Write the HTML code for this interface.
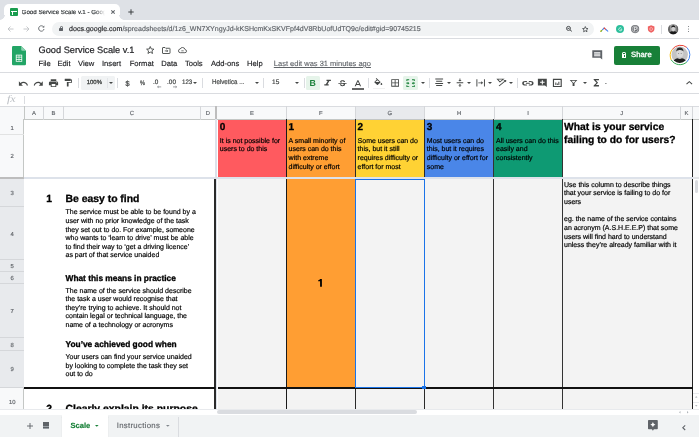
<!DOCTYPE html>
<html><head><meta charset="utf-8">
<style>
*{box-sizing:border-box;margin:0;padding:0}
html,body{width:699px;height:437px;overflow:hidden;background:#fff;font-family:"Liberation Sans",sans-serif;position:relative;text-rendering:geometricPrecision}
.a{position:absolute}
.t{position:absolute;white-space:nowrap;line-height:1}
svg{position:absolute;overflow:visible}
#root{position:absolute;left:0;top:0;width:699px;height:437px;will-change:transform}
.k{-webkit-text-stroke:0.18px #000}
.kb{-webkit-text-stroke:0.3px #000}
</style></head><body><div id="root">

<!-- ===== Chrome tab strip ===== -->
<div class="a" style="left:0;top:0;width:699px;height:20px;background:#dee1e6"></div>
<div class="a" style="left:4px;top:4px;width:116px;height:17px;background:#fff;border-radius:5px 5px 0 0"></div>
<div class="a" style="left:0px;top:15px;width:5px;height:5px;background:radial-gradient(circle at 0 0,#dee1e6 4.5px,#fff 5px)"></div>
<div class="a" style="left:119px;top:15px;width:5px;height:5px;background:radial-gradient(circle at 100% 0,#dee1e6 4.5px,#fff 5px)"></div>
<!-- favicon -->
<div class="a" style="left:9.7px;top:8px;width:8.1px;height:8px;background:#1a9d4f;border-radius:1px"></div>
<div class="a" style="left:10.6px;top:11px;width:6.3px;height:0.8px;background:#fff"></div>
<div class="a" style="left:12.2px;top:11px;width:0.8px;height:4.2px;background:#fff"></div>
<div class="t" style="-webkit-text-stroke:0.2px #3c4043;left:21.6px;top:10.00px;font-size:6.2px;color:#3c4043;width:84px;overflow:hidden">Good Service Scale v.1 - Google Sheets</div>
<div class="a" style="left:95px;top:6px;width:11px;height:12px;background:linear-gradient(90deg,rgba(255,255,255,0),#fff 90%)"></div>
<svg style="left:110.8px;top:10.3px" width="4" height="4" viewBox="0 0 4 4"><path d="M0.3 0.3L3.7 3.7M3.7 0.3L0.3 3.7" stroke="#5f6368" stroke-width="1.05"/></svg>
<svg style="left:128px;top:9px" width="6" height="6" viewBox="0 0 6 6"><path d="M3 0.3V5.7M0.3 3H5.7" stroke="#3c4043" stroke-width="1"/></svg>

<!-- ===== Address row ===== -->
<div class="a" style="left:0;top:37.5px;width:699px;height:0.6px;background:#dadce0"></div>
<svg style="left:7px;top:25.5px" width="7" height="6" viewBox="0 0 7 6"><path d="M6.5 3H1M3.5 0.5L1 3L3.5 5.5" stroke="#c0c2c5" stroke-width="0.9" fill="none"/></svg>
<svg style="left:22.7px;top:25.5px" width="7" height="6" viewBox="0 0 7 6"><path d="M0.5 3H6M3.5 0.5L6 3L3.5 5.5" stroke="#c0c2c5" stroke-width="0.9" fill="none"/></svg>
<svg style="left:37.8px;top:25.3px" width="7" height="7" viewBox="0 0 7 7"><path d="M5.6 2A2.7 2.7 0 1 0 6 4" stroke="#5f6368" stroke-width="0.9" fill="none"/><path d="M6.3 0.6V2.6H4.3Z" fill="#5f6368"/></svg>
<div class="a" style="left:52.2px;top:22.1px;width:541.6px;height:13.6px;background:#f1f3f4;border-radius:7px"></div>
<div class="a" style="left:59.3px;top:27.7px;width:4px;height:3.4px;background:#5f6368;border-radius:0.4px"></div>
<div class="a" style="left:60px;top:25.6px;width:2.6px;height:3.2px;border:0.8px solid #5f6368;border-radius:1.3px 1.3px 0 0"></div>
<div class="t" style="-webkit-text-stroke:0.15px #202124;left:69.1px;top:25.90px;font-size:7.05px;color:#202124">docs.google.com<span style="color:#5f6368;-webkit-text-stroke:0.15px #5f6368">/spreadsheets/d/1z6_WN7XYngyJd-kKSHcmKxSKVFpf4dV8RbUofUdTQ9c/edit#gid=90745215</span></div>
<svg style="left:566px;top:26.3px" width="6.6" height="5.6" viewBox="0 0 6.6 5.6"><circle cx="2.5" cy="2.4" r="2" stroke="#3c4043" stroke-width="0.9" fill="none"/><path d="M4 3.9L5.9 5.4M1.5 2.4H3.5" stroke="#3c4043" stroke-width="0.9"/></svg>
<svg style="left:581.5px;top:26px" width="6.6" height="6" viewBox="0 0 24 22"><path d="M12 2l2.9 6.9 7.1.6-5.4 4.7 1.6 7-6.2-3.7-6.2 3.7 1.6-7L2 9.5l7.1-.6z" stroke="#3c4043" stroke-width="2.8" fill="none" stroke-linejoin="round"/></svg>
<svg style="left:600.2px;top:26.5px" width="8.4" height="5" viewBox="0 0 8.4 5"><path d="M0.6 4.3L2.6 2.6" stroke="#fbbc04" stroke-width="1.1" stroke-linecap="round"/><path d="M2.6 2.6L4.2 1" stroke="#4285f4" stroke-width="1.1" stroke-linecap="round"/><path d="M4.2 1L6 2.6" stroke="#ea4335" stroke-width="1.1" stroke-linecap="round"/><path d="M6 2.6L7.8 4.2" stroke="#4285f4" stroke-width="1.1" stroke-linecap="round"/><circle cx="1.3" cy="4" r="0.7" fill="#34a853"/></svg>
<div class="a" style="left:615.8px;top:25.2px;width:8.2px;height:8.2px;border-radius:50%;background:#2dbf9c"></div>
<svg style="left:617.6px;top:27px" width="4.6" height="4.6" viewBox="0 0 10 10"><path d="M7.8 3A3.4 3.4 0 1 0 8.4 5.6H5.4" stroke="#fff" stroke-width="1.4" fill="none"/></svg>
<svg style="left:631.4px;top:25.1px" width="8.2" height="8.2" viewBox="0 0 8.2 8.2"><circle cx="4.1" cy="4.1" r="4.1" fill="#6f7276"/><circle cx="4.1" cy="4.1" r="3" fill="none" stroke="#c9cacc" stroke-width="0.7"/><path d="M3.3 6.2V2.3H4.6Q5.8 2.3 5.8 3.4Q5.8 4.5 4.6 4.5H3.3" stroke="#fff" stroke-width="0.8" fill="none"/></svg>
<svg style="left:647px;top:25.4px" width="8.3" height="8" viewBox="0 0 8 9"><path d="M4 0.3L7.7 1.6V4.5Q7.7 7.3 4 8.7Q0.3 7.3 0.3 4.5V1.6Z" fill="#ef6262"/><circle cx="4" cy="4.5" r="1.6" fill="none" stroke="#fff" stroke-width="0.7" opacity="0.7"/></svg>
<div class="a" style="left:661.2px;top:25px;width:0.6px;height:8.5px;background:#dadce0"></div>
<svg style="left:667.5px;top:24.2px" width="10.4" height="10.4" viewBox="0 0 21.4 21.4"><defs><clipPath id="av2"><circle cx="10.7" cy="10.7" r="10.7"/></clipPath></defs><g clip-path="url(#av2)"><rect width="21.4" height="21.4" fill="#9a9a9a"/><ellipse cx="10.9" cy="10" rx="4" ry="5" fill="#d0d0d0"/><path d="M6.5 8Q6.6 3 10.8 2.8Q15.2 3 15.3 8Q14 5.8 10.8 6Q7.8 5.9 6.5 8Z" fill="#222"/><path d="M1 22Q2.5 15.5 8.2 15Q10.8 16.6 13.4 15Q19 15.5 20.4 22Z" fill="#1a1a1a"/><path d="M0 0H4V21.4H0ZM17.4 0H21.4V21.4H17.4Z" fill="#444" opacity="0.6"/></g></svg>
<div class="a" style="left:687.8px;top:26px;width:1.2px;height:1.2px;border-radius:50%;background:#5f6368;box-shadow:0 2.5px 0 #5f6368,0 5px 0 #5f6368"></div>

<!-- ===== Docs header ===== -->
<svg style="left:12.2px;top:45.8px" width="14" height="19.2" viewBox="0 0 14 19.2"><path d="M0 1.2Q0 0 1.2 0H9.2L14 4.8V18Q14 19.2 12.8 19.2H1.2Q0 19.2 0 18Z" fill="#23a566"/><path d="M9.2 0V3.6Q9.2 4.8 10.4 4.8H14Z" fill="#8ed1b1"/><path d="M3.8 8.7H10.2V15.7H3.8Z" fill="#fff"/><path d="M4.6 9.5H6.7V10.8H4.6ZM7.3 9.5H9.4V10.8H7.3ZM4.6 11.6H6.7V12.9H4.6ZM7.3 11.6H9.4V12.9H7.3ZM4.6 13.7H6.7V14.9H4.6ZM7.3 13.7H9.4V14.9H7.3Z" fill="#23a566"/></svg>
<div class="t" style="-webkit-text-stroke:0.2px #202124;left:38.5px;top:45.6px;font-size:9.25px;color:#202124">Good Service Scale v.1</div>
<svg style="left:145.8px;top:46px" width="8.5" height="8" viewBox="0 0 24 23"><path d="M12 1.5l3 7 7.5.6-5.7 4.9 1.8 7.4L12 17.5l-6.6 3.9 1.8-7.4L1.5 9.1 9 8.5z" stroke="#444746" stroke-width="2.6" fill="none" stroke-linejoin="round"/></svg>
<svg style="left:161.8px;top:46.5px" width="8.5" height="7" viewBox="0 0 17 14"><path d="M1 2Q1 1 2 1H6L7.5 2.5H15Q16 2.5 16 3.5V12Q16 13 15 13H2Q1 13 1 12Z" stroke="#444746" stroke-width="1.8" fill="none"/><path d="M5.5 7.8H11.5M9.3 5.6L11.5 7.8L9.3 10" stroke="#444746" stroke-width="1.6" fill="none"/></svg>
<svg style="left:178px;top:47px" width="9" height="6.2" viewBox="0 0 19 13"><path d="M5 12H14.5Q18 12 18 8.8Q18 5.8 15 5.5Q14 1 9.5 1Q6 1 4.6 4.2Q1 4.6 1 8.2Q1 12 5 12Z" stroke="#444746" stroke-width="1.8" fill="none"/><path d="M7 8H12" stroke="#444746" stroke-width="1.5" fill="none"/></svg>

<div class="t" style="-webkit-text-stroke:0.15px #202124;top:59.9px;font-size:7.6px;color:#202124;left:38.5px">File</div>
<div class="t" style="-webkit-text-stroke:0.15px #202124;top:59.9px;font-size:7.6px;color:#202124;left:57.5px">Edit</div>
<div class="t" style="-webkit-text-stroke:0.15px #202124;top:59.9px;font-size:7.6px;color:#202124;left:78px">View</div>
<div class="t" style="-webkit-text-stroke:0.15px #202124;top:59.9px;font-size:7.6px;color:#202124;left:102px">Insert</div>
<div class="t" style="-webkit-text-stroke:0.15px #202124;top:59.9px;font-size:7.6px;color:#202124;left:129.7px">Format</div>
<div class="t" style="-webkit-text-stroke:0.15px #202124;top:59.9px;font-size:7.6px;color:#202124;left:161.3px">Data</div>
<div class="t" style="-webkit-text-stroke:0.15px #202124;top:59.9px;font-size:7.6px;color:#202124;left:184.9px">Tools</div>
<div class="t" style="-webkit-text-stroke:0.15px #202124;top:59.9px;font-size:7.6px;color:#202124;left:210.9px">Add-ons</div>
<div class="t" style="-webkit-text-stroke:0.15px #202124;top:59.9px;font-size:7.6px;color:#202124;left:247px">Help</div>
<div class="t" style="top:59.9px;-webkit-text-stroke:0.12px #5f6368;font-size:7.5px;color:#5f6368;left:273.8px;text-decoration:underline">Last edit was 31 minutes ago</div>

<svg style="left:591.9px;top:49.9px" width="10.5" height="10" viewBox="0 0 10.5 10"><path d="M0.3 0.2H10.2V9.6L8.1 7.8H0.3Z" fill="#5f6368"/><path d="M2.1 2.2H8.3V3.2H2.1ZM2.1 5.2H8.3V6.2H2.1Z" fill="#fff"/><path d="M2.1 3.2H8.3V5.2H2.1Z" fill="#c9cbcd"/></svg>
<div class="a" style="left:613.8px;top:45.8px;width:46.2px;height:18.9px;background:#188038;border-radius:2px"></div>
<div class="a" style="left:621.6px;top:54.3px;width:4.8px;height:3.4px;background:#fff;border-radius:0.5px"></div><div class="a" style="left:623.6px;top:55.4px;width:0.8px;height:1.2px;background:#188038"></div>
<div class="a" style="left:622.4px;top:52px;width:3.2px;height:3.4px;border:0.8px solid #fff;border-bottom:none;border-radius:1.6px 1.6px 0 0"></div>
<div class="t" style="-webkit-text-stroke:0.3px #fff;left:631px;top:51.4px;font-size:7.7px;letter-spacing:0.05px;color:#fff">Share</div>
<svg style="left:668.8px;top:44.4px" width="21.4" height="21.4" viewBox="0 0 21.4 21.4"><defs><clipPath id="av"><circle cx="10.7" cy="10.7" r="8.2"/></clipPath></defs><g fill="none" stroke-width="1"><path d="M3.2 5.5A10.2 10.2 0 0 1 17.9 3.5" stroke="#ea4335"/><path d="M17.9 3.5A10.2 10.2 0 0 1 17.9 17.9" stroke="#4285f4"/><path d="M17.9 17.9A10.2 10.2 0 0 1 2.2 15.8" stroke="#34a853"/><path d="M2.2 15.8A10.2 10.2 0 0 1 3.2 5.5" stroke="#fbbc04"/></g><g clip-path="url(#av)"><rect width="21.4" height="21.4" fill="#c4c4c4"/><ellipse cx="10.9" cy="9.2" rx="3.4" ry="4.2" fill="#d9d9d9"/><path d="M7.2 7.5Q7.4 3.6 10.8 3.4Q14.4 3.5 14.5 7.5Q13.6 5.8 10.8 6Q8.2 5.9 7.2 7.5Z" fill="#2b2b2b"/><path d="M3 21Q4 14.8 8.6 14.2Q10.8 15.8 13 14.2Q17.6 14.8 18.6 21Z" fill="#1f1f1f"/><ellipse cx="9.6" cy="9.6" rx="0.6" ry="0.4" fill="#555"/><ellipse cx="12.2" cy="9.6" rx="0.6" ry="0.4" fill="#555"/></g></svg>

<div class="a" style="left:0;top:72px;width:699px;height:0.7px;background:#dadce0"></div>

<!-- ===== Toolbar ===== -->
<!-- separators -->
<div class="a" style="left:77.8px;top:78px;width:0.6px;height:10.2px;background:#dadce0"></div>
<div class="a" style="left:117.4px;top:78px;width:0.6px;height:10.2px;background:#dadce0"></div>
<div class="a" style="left:202.2px;top:78px;width:0.6px;height:10.2px;background:#dadce0"></div>
<div class="a" style="left:263.3px;top:78px;width:0.6px;height:10.2px;background:#dadce0"></div>
<div class="a" style="left:303.5px;top:78px;width:0.6px;height:10.2px;background:#dadce0"></div>
<div class="a" style="left:368.3px;top:78px;width:0.6px;height:10.2px;background:#dadce0"></div>
<div class="a" style="left:429.3px;top:78px;width:0.6px;height:10.2px;background:#dadce0"></div>
<div class="a" style="left:517.1px;top:78px;width:0.6px;height:10.2px;background:#dadce0"></div>
<!-- zoom box -->
<div class="a" style="left:81.2px;top:76.3px;width:33.4px;height:13.3px;background:#f1f3f4;border-radius:1.5px"></div>
<div class="a" style="left:107.3px;top:78px;width:0.6px;height:10px;background:#e3e5e8"></div>
<div class="t" style="-webkit-text-stroke:0.3px #444746;left:86.7px;top:80.40px;font-size:6px;color:#444746">100%</div>
<!-- text buttons -->
<div class="t" style="-webkit-text-stroke:0.25px #444746;left:125.5px;top:80.00px;font-size:7.4px;color:#444746">$</div>
<div class="t" style="-webkit-text-stroke:0.25px #444746;left:140px;top:80.60px;font-size:6.6px;color:#444746;transform:scaleX(0.85);transform-origin:0 0">%</div>
<div class="t" style="-webkit-text-stroke:0.2px #444746;left:152.9px;top:80.40px;font-size:6.4px;color:#444746">.0</div>
<svg style="left:157px;top:85.9px" width="4.2" height="1.8" viewBox="0 0 4.2 1.8"><path d="M4.2 0.9H0.8M1.6 0.1L0.5 0.9L1.6 1.7" stroke="#5f6368" stroke-width="0.6" fill="none"/></svg>
<div class="t" style="-webkit-text-stroke:0.2px #444746;left:167.1px;top:80.40px;font-size:6.4px;color:#444746">.00</div>
<svg style="left:172.6px;top:85.9px" width="4.2" height="1.8" viewBox="0 0 4.2 1.8"><path d="M0 0.9H3.4M2.6 0.1L3.7 0.9L2.6 1.7" stroke="#5f6368" stroke-width="0.6" fill="none"/></svg>
<div class="t" style="-webkit-text-stroke:0.2px #444746;left:181.8px;top:80.40px;font-size:6.5px;color:#444746;transform:scaleX(0.95);transform-origin:0 0">123</div>
<div class="t" style="-webkit-text-stroke:0.2px #444746;left:212.4px;top:80.40px;font-size:6.8px;color:#444746;transform:scaleX(0.91);transform-origin:0 0">Helvetica ...</div>
<div class="t" style="-webkit-text-stroke:0.2px #444746;left:272.1px;top:80.30px;font-size:6.5px;color:#444746">15</div>
<!-- arrows -->
<svg style="left:109.2px;top:82.4px" width="4" height="2" viewBox="0 0 4 2"><path d="M0 0H4L2 2Z" fill="#444746"/></svg>
<svg style="left:193.2px;top:82.4px" width="4" height="2" viewBox="0 0 4 2"><path d="M0 0H4L2 2Z" fill="#444746"/></svg>
<svg style="left:254.8px;top:82.4px" width="4" height="2" viewBox="0 0 4 2"><path d="M0 0H4L2 2Z" fill="#444746"/></svg>
<svg style="left:294.5px;top:82.4px" width="4" height="2" viewBox="0 0 4 2"><path d="M0 0H4L2 2Z" fill="#444746"/></svg>
<svg style="left:420.8px;top:82.4px" width="4" height="2" viewBox="0 0 4 2"><path d="M0 0H4L2 2Z" fill="#444746"/></svg>
<svg style="left:446.5px;top:82.4px" width="4" height="2" viewBox="0 0 4 2"><path d="M0 0H4L2 2Z" fill="#444746"/></svg>
<svg style="left:467.1px;top:82.4px" width="4" height="2" viewBox="0 0 4 2"><path d="M0 0H4L2 2Z" fill="#444746"/></svg>
<svg style="left:488.2px;top:82.4px" width="4" height="2" viewBox="0 0 4 2"><path d="M0 0H4L2 2Z" fill="#444746"/></svg>
<svg style="left:508.8px;top:82.4px" width="4" height="2" viewBox="0 0 4 2"><path d="M0 0H4L2 2Z" fill="#444746"/></svg>
<svg style="left:583px;top:82.4px" width="4" height="2" viewBox="0 0 4 2"><path d="M0 0H4L2 2Z" fill="#444746"/></svg>
<svg style="left:605px;top:83.2px" width="1.8" height="0.9" viewBox="0 0 4 2"><path d="M0 0H4L2 2Z" fill="#444746"/></svg>
<!-- Bold btn -->
<div class="a" style="left:306px;top:76.1px;width:14.2px;height:13.6px;background:#e6f4ea;border-radius:1.5px"></div>
<div class="t" style="left:309.6px;top:79px;font-size:8.8px;font-weight:700;color:#188038">B</div>
<!-- text color underbar -->
<div class="a" style="left:352px;top:87.7px;width:11.8px;height:2px;background:#666"></div>
<div class="a" style="left:373px;top:88px;width:12px;height:1.2px;background:#f1f1f1"></div>
<!-- merge bg -->
<div class="a" style="left:403.4px;top:76px;width:14.7px;height:13.8px;background:#e6f4ea;border-radius:1.5px"></div>
<svg style="left:17.71px;top:77.56px" width="10.67" height="11.47" viewBox="0 0 24 24" preserveAspectRatio="none" fill="#444746"><path d='M12.5 8c-2.65 0-5.05.99-6.9 2.6L2 7v9h9l-3.62-3.62c1.39-1.16 3.16-1.88 5.12-1.88 3.54 0 6.55 2.31 7.6 5.5l2.37-.78C21.08 11.03 17.15 8 12.5 8z'/></svg><!-- undo -->
<svg style="left:33.32px;top:77.56px" width="10.67" height="11.47" viewBox="0 0 24 24" preserveAspectRatio="none" fill="#444746"><path d='M18.4 10.6C16.55 8.99 14.15 8 11.5 8c-4.65 0-8.58 3.03-9.96 7.22L3.9 16c1.050-3.19 4.05-5.5 7.6-5.5 1.95 0 3.73.72 5.12 1.88L13 16h9V7l-3.6 3.6z'/></svg><!-- redo -->
<svg style="left:47.88px;top:77.70px" width="11.04" height="10.40" viewBox="0 0 24 24" preserveAspectRatio="none" fill="#444746"><path d='M19 8H5c-1.66 0-3 1.34-3 3v6h4v4h12v-4h4v-6c0-1.66-1.34-3-3-3zm-3 11H8v-5h8v5zm3-7c-.55 0-1-.45-1-1s.45-1 1-1 1 .45 1 1-.45 1-1 1zm-1-9H6v4h12V3z'/></svg><!-- print -->
<svg style="left:63.08px;top:78.22px" width="10.31" height="9.36" viewBox="0 0 24 24" preserveAspectRatio="none" fill="#444746"><path d='M18 4V3c0-.55-.45-1-1-1H5c-.55 0-1 .45-1 1v4c0 .55.45 1 1 1h12c.55 0 1-.45 1-1V6h1v4H9v11c0 .55.45 1 1 1h2c.55 0 1-.45 1-1v-9h8V4h-3z'/></svg><!-- paint -->
<svg style="left:321.10px;top:78.31px" width="13.20" height="10.11" viewBox="0 0 24 24" preserveAspectRatio="none" fill="#444746"><path d='M10 4v3h2.21l-3.42 8H6v3h8v-3h-2.21l3.42-8H18V4z'/></svg><!-- italic -->
<svg style="left:337.43px;top:78.80px" width="10.93" height="9.59" viewBox="0 0 24 24" preserveAspectRatio="none" fill="#444746"><path d='M7.24 8.75c-.26-.48-.39-1.03-.39-1.67 0-.61.13-1.16.4-1.67.26-.5.63-.93 1.11-1.29.48-.35 1.05-.63 1.7-.83.66-.19 1.39-.29 2.18-.29.81 0 1.54.11 2.210.34.66.22 1.23.54 1.69.94.47.4.83.88 1.08 1.43.25.55.38 1.15.38 1.81h-3.01c0-.31-.05-.59-.15-.85-.09-.27-.24-.49-.44-.68-.2-.19-.45-.33-.75-.44-.3-.1-.66-.16-1.06-.16-.39 0-.74.04-1.03.13-.29.09-.53.21-.72.36-.19.16-.34.34-.44.55-.1.21-.15.43-.15.66 0 .48.25.88.74 1.21.38.25.77.48 1.41.7H7.39c-.05-.08-.11-.17-.15-.25zM21 12v-2H3v2h9.62c.18.07.4.14.55.2.37.17.66.34.87.51.21.17.35.36.43.57.07.2.11.43.11.69 0 .23-.05.45-.14.66-.09.2-.23.38-.42.53-.19.15-.42.26-.71.35-.29.08-.63.13-1.01.13-.43 0-.83-.04-1.18-.13s-.66-.23-.91-.42c-.25-.19-.45-.44-.59-.75-.14-.31-.25-.76-.25-1.21H6.4c0 .55.08 1.13.24 1.58.16.45.37.85.65 1.21.28.35.6.66.98.92.37.26.78.48 1.22.65.44.17.9.3 1.38.39.48.08.96.13 1.44.13.8 0 1.530-.09 2.18-.28s1.21-.45 1.67-.79c.46-.34.82-.77 1.070-1.27s.38-1.07.38-1.71c0-.6-.1-1.14-.31-1.61-.05-.11-.11-.23-.17-.33H21z'/></svg><!-- strike -->
<svg style="left:352.09px;top:78.74px" width="11.82" height="10.11" viewBox="0 0 24 24" preserveAspectRatio="none" fill="#444746"><path d='M11 3L5.5 17h2.25l1.12-3h6.25l1.12 3h2.25L13 3h-2zm-1.38 9L12 5.67 14.38 12H9.62z'/></svg><!-- textA -->
<svg style="left:373.27px;top:77.80px" width="10.67" height="9.88" viewBox="0 0 24 24" preserveAspectRatio="none" fill="#444746"><path d='M16.56 8.94L7.62 0 6.21 1.41l2.38 2.38-5.15 5.15c-.59.59-.59 1.54 0 2.12l5.5 5.5c.29.29.68.44 1.06.44s.77-.15 1.06-.44l5.5-5.5c.59-.58.59-1.53 0-2.120zM5.21 10L10 5.21 14.79 10H5.21zM19 11.5s-2 2.17-2 3.5c0 1.1.9 2 2 2s2-.9 2-2c0-1.33-2-3.5-2-3.5z'/></svg><!-- fill -->
<svg style="left:389.62px;top:77.77px" width="10.27" height="9.87" viewBox="0 0 24 24" preserveAspectRatio="none" fill="#444746"><path d='M3 3v18h18V3H3zm8 16H5v-6h6v6zm0-8H5V5h6v6zm8 8h-6v-6h6v6zm0-8h-6V5h6v6z'/></svg><!-- borders -->
<svg style="left:405.40px;top:77.72px" width="11.20" height="10.27" viewBox="0 0 24 24" preserveAspectRatio="none" fill="#188038"><path d='M3 3h6v2H5v2H3zM15 3h6v4h-2V5h-4zM3 17h2v2h4v2H3zM19 17h2v4h-6v-2h4zM3 10.5h3V8.5l3.5 3.5-3.5 3.5v-2H3zM21 10.5h-3V8.5l-3.5 3.5 3.5 3.5v-2h3z'/></svg><!-- merge -->
<svg style="left:433.70px;top:77.47px" width="10.40" height="12.24" viewBox="0 0 24 24" preserveAspectRatio="none" fill="#444746"><path d='M3 3h18v2H3zM5 7.3h14v2H5zM3 11.6h18v2H3zM5 15.9h14v2H5z'/></svg><!-- align -->
<svg style="left:454.95px;top:77.70px" width="9.90" height="9.49" viewBox="0 0 24 24" preserveAspectRatio="none" fill="#444746"><path d='M8 19h3v4h2v-4h3l-4-4-4 4zm8-14h-3V1h-2v4H8l4 4 4-4zM4 11v2h16v-2H4z'/></svg><!-- valign -->
<svg style="left:475.48px;top:78.08px" width="11.33" height="9.73" viewBox="0 0 24 24" preserveAspectRatio="none" fill="#444746"><path d='M3 3h2v18H3zM19 3h2v18h-2zM7 11h6.2V8l4 4-4 4v-3H7z'/></svg><!-- wrap -->
<svg style="left:496.03px;top:78.12px" width="11.73" height="9.47" viewBox="0 0 24 24" preserveAspectRatio="none" fill="#444746"><path d='M3 3h12l-7 7z' fill='none' stroke='#444746' stroke-width='2.2'/><path d='M19.5 8.5L7 21l-1.6-1.6 12.5-12.5z'/><path d='M21 5l-.5 6-5.5-5.5z'/></svg><!-- rotate -->
<svg style="left:521.82px;top:78.85px" width="11.76" height="8.40" viewBox="0 0 24 24" preserveAspectRatio="none" fill="#444746"><path d='M10 7H7a5 5 0 0 0 0 10h3M14 7h3a5 5 0 0 1 0 10h-3M8 12h8' fill='none' stroke='#444746' stroke-width='3.2'/></svg><!-- link -->
<svg style="left:537.21px;top:78.17px" width="10.68" height="9.96" viewBox="0 0 24 24" preserveAspectRatio="none" fill="#444746"><path fill-rule='evenodd' d='M2 2h20v20l-4-4H2zM10.8 5.2v3.9H6.9v2.6h3.9v3.9h2.4v-3.9h3.9V9.1h-3.9V5.2z'/></svg><!-- comment -->
<svg style="left:552.11px;top:78.17px" width="10.68" height="9.96" viewBox="0 0 24 24" preserveAspectRatio="none" fill="#444746"><path fill-rule='evenodd' d='M2 2h20v20H2zM4.6 4.6v14.8h14.8V4.6z'/><path d='M7.5 11h2.2v6H7.5zM10.9 13h2.2v4h-2.2zM14.3 9h2.2v8h-2.2z'/></svg><!-- chart -->
<svg style="left:568.74px;top:79.02px" width="9.12" height="7.87" viewBox="0 0 24 24" preserveAspectRatio="none" fill="#444746"><path fill-rule='evenodd' d='M2 3h20l-7.5 9.5V21h-5v-8.5zM6.5 5.3h11L12 12.2z'/></svg><!-- filter -->
<svg style="left:591.15px;top:77.42px" width="10.60" height="11.25" viewBox="0 0 24 24" preserveAspectRatio="none" fill="#444746"><path d='M18 4H6v2l6.5 6L6 18v2h12v-3h-7l5-5-5-5h7z'/></svg><!-- sigma -->
<svg style="left:683.15px;top:77.31px" width="12.60" height="11.66" viewBox="0 0 24 24" preserveAspectRatio="none" fill="#444746"><path d='M12 8l-6 6 1.41 1.41L12 10.83l4.59 4.58L18 14z'/></svg><!-- expand -->


<div class="a" style="left:0;top:93px;width:699px;height:0.7px;background:#dadce0"></div>

<!-- ===== Formula bar ===== -->
<div class="t" style="left:7.1px;top:94.6px;font-family:'Liberation Serif',serif;font-style:italic;font-size:10px;color:#b8bcc1;transform:scaleX(1.2);transform-origin:0 0">fx</div>
<div class="a" style="left:24px;top:95.8px;width:0.7px;height:8.6px;background:#dadce0"></div>

<!-- ===== Grid ===== -->
<!-- column header row -->
<div class="a" style="left:0;top:106.3px;width:699px;height:13.7px;background:#f8f9fa;border-top:0.6px solid #dadce0;border-bottom:0.7px solid #c4c7c5"></div>
<div class="a" style="left:355.3px;top:106.6px;width:69.2px;height:12.2px;background:#e8eaed"></div>
<!-- row header column -->
<div class="a" style="left:0;top:119.4px;width:24.4px;height:290px;background:#f8f9fa;border-right:0.7px solid #c4c7c5"></div>
<div class="a" style="left:0;top:178.8px;width:24px;height:208.5px;background:#e8eaed"></div>
<!-- header col lines -->
<div class="a" style="left:24.1px;top:106.3px;width:0.7px;height:13.7px;background:#c4c7c5"></div>
<div class="a" style="left:43.4px;top:106.3px;width:0.6px;height:13.7px;background:#d5d7da"></div>
<div class="a" style="left:63.1px;top:106.3px;width:0.6px;height:13.7px;background:#d5d7da"></div>
<div class="a" style="left:200.3px;top:106.3px;width:0.6px;height:13.7px;background:#d5d7da"></div>
<div class="a" style="left:286.1px;top:106.3px;width:0.6px;height:13.7px;background:#d5d7da"></div>
<div class="a" style="left:355.1px;top:106.3px;width:0.6px;height:13.7px;background:#d5d7da"></div>
<div class="a" style="left:424.3px;top:106.3px;width:0.6px;height:13.7px;background:#d5d7da"></div>
<div class="a" style="left:493.5px;top:106.3px;width:0.6px;height:13.7px;background:#d5d7da"></div>
<div class="a" style="left:562.1px;top:106.3px;width:0.6px;height:13.7px;background:#d5d7da"></div>
<div class="a" style="left:680.3px;top:106.3px;width:0.6px;height:13.7px;background:#d5d7da"></div>
<div class="a" style="left:692.1px;top:106.3px;width:0.6px;height:13.7px;background:#d5d7da"></div>
<!-- header letters -->
<div class="t" style="left:24.4px;width:19.2px;text-align:center;top:111.7px;font-size:5.9px;color:#5f6368;-webkit-text-stroke:0.15px #5f6368">A</div>
<div class="t" style="left:43.6px;width:19.7px;text-align:center;top:111.7px;font-size:5.9px;color:#5f6368;-webkit-text-stroke:0.15px #5f6368">B</div>
<div class="t" style="left:63.3px;width:137.2px;text-align:center;top:111.7px;font-size:5.9px;color:#5f6368;-webkit-text-stroke:0.15px #5f6368">C</div>
<div class="t" style="left:200.5px;width:14.7px;text-align:center;top:111.7px;font-size:5.9px;color:#5f6368;-webkit-text-stroke:0.15px #5f6368">D</div>
<div class="t" style="left:217.5px;width:68.8px;text-align:center;top:111.7px;font-size:5.9px;color:#5f6368;-webkit-text-stroke:0.15px #5f6368">E</div>
<div class="t" style="left:286.3px;width:69px;text-align:center;top:111.7px;font-size:5.9px;color:#5f6368;-webkit-text-stroke:0.15px #5f6368">F</div>
<div class="t" style="left:355.3px;width:69.2px;text-align:center;top:111.7px;font-size:5.9px;color:#5f6368;-webkit-text-stroke:0.15px #5f6368">G</div>
<div class="t" style="left:424.5px;width:69.2px;text-align:center;top:111.7px;font-size:5.9px;color:#5f6368;-webkit-text-stroke:0.15px #5f6368">H</div>
<div class="t" style="left:493.7px;width:68.6px;text-align:center;top:111.7px;font-size:5.9px;color:#5f6368;-webkit-text-stroke:0.15px #5f6368">I</div>
<div class="t" style="left:562.3px;width:118.7px;text-align:center;top:111.7px;font-size:5.9px;color:#5f6368;-webkit-text-stroke:0.15px #5f6368">J</div>
<div class="t" style="left:680.6px;width:11.7px;text-align:center;top:111.7px;font-size:5.9px;color:#5f6368;-webkit-text-stroke:0.15px #5f6368">K</div>
<!-- row header lines and numbers -->
<div class="a" style="left:0;top:134.2px;width:24.4px;height:0.6px;background:#e2e3e3"></div>
<div class="a" style="left:0;top:206px;width:24.4px;height:0.6px;background:#d5d7da"></div>
<div class="a" style="left:0;top:259.3px;width:24.4px;height:0.6px;background:#d5d7da"></div>
<div class="a" style="left:0;top:271.2px;width:24.4px;height:0.6px;background:#d5d7da"></div>
<div class="a" style="left:0;top:283.2px;width:24.4px;height:0.6px;background:#d5d7da"></div>
<div class="a" style="left:0;top:337px;width:24.4px;height:0.6px;background:#d5d7da"></div>
<div class="a" style="left:0;top:350.3px;width:24.4px;height:0.6px;background:#d5d7da"></div>
<div class="a" style="left:0;top:387.1px;width:24.4px;height:0.6px;background:#d5d7da"></div>
<div class="t" style="left:0;width:24.4px;text-align:center;top:126.5px;font-size:5.9px;color:#5f6368;-webkit-text-stroke:0.15px #5f6368">1</div>
<div class="t" style="left:0;width:24.4px;text-align:center;top:155.2px;font-size:5.9px;color:#5f6368;-webkit-text-stroke:0.15px #5f6368">2</div>
<div class="t" style="left:0;width:24.4px;text-align:center;top:192.2px;font-size:5.9px;color:#5f6368;-webkit-text-stroke:0.15px #5f6368">3</div>
<div class="t" style="left:0;width:24.4px;text-align:center;top:232.5px;font-size:5.9px;color:#5f6368;-webkit-text-stroke:0.15px #5f6368">4</div>
<div class="t" style="left:0;width:24.4px;text-align:center;top:265.0px;font-size:5.9px;color:#5f6368;-webkit-text-stroke:0.15px #5f6368">5</div>
<div class="t" style="left:0;width:24.4px;text-align:center;top:277.0px;font-size:5.9px;color:#5f6368;-webkit-text-stroke:0.15px #5f6368">6</div>
<div class="t" style="left:0;width:24.4px;text-align:center;top:310.0px;font-size:5.9px;color:#5f6368;-webkit-text-stroke:0.15px #5f6368">7</div>
<div class="t" style="left:0;width:24.4px;text-align:center;top:343.7px;font-size:5.9px;color:#5f6368;-webkit-text-stroke:0.15px #5f6368">8</div>
<div class="t" style="left:0;width:24.4px;text-align:center;top:368.3px;font-size:5.9px;color:#5f6368;-webkit-text-stroke:0.15px #5f6368">9</div>
<div class="t" style="left:0;width:24.4px;text-align:center;top:401.0px;font-size:5.9px;color:#5f6368;-webkit-text-stroke:0.15px #5f6368">10</div>

<!-- frozen column line (header) -->
<div class="a" style="left:215.2px;top:106.3px;width:2.3px;height:13.7px;background:#bdbdbd"></div>

<!-- row 1-2 colored cells -->
<div class="a" style="left:217.5px;top:120px;width:68.8px;height:56.7px;background:#ff5a5f"></div>
<div class="a" style="left:286.3px;top:120px;width:69px;height:56.7px;background:#ff9e33"></div>
<div class="a" style="left:355.3px;top:120px;width:69.2px;height:56.7px;background:#ffd234"></div>
<div class="a" style="left:424.5px;top:120px;width:69.2px;height:56.7px;background:#4a86e8"></div>
<div class="a" style="left:493.7px;top:120px;width:68.6px;height:56.7px;background:#0e9a73"></div>
<!-- rows 3-10 cell fills -->
<div class="a" style="left:217.5px;top:178.8px;width:475.5px;height:230.2px;background:#f3f3f3"></div>
<div class="a" style="left:286.3px;top:178.8px;width:69px;height:208.5px;background:#ff9e33"></div>
<!-- frozen col line (grid) -->
<div class="a" style="left:215.2px;top:119.4px;width:2.3px;height:290px;background:#dde2ea"></div>
<!-- black borders -->
<div class="a" style="left:214.4px;top:178.8px;width:1.3px;height:230.2px;background:#2a2a2a"></div>
<div class="a" style="left:285.9px;top:119.4px;width:1px;height:290px;background:#1a1a1a"></div>
<div class="a" style="left:354.9px;top:119.4px;width:1.1px;height:290px;background:#2a2a2a"></div>
<div class="a" style="left:423.8px;top:119.4px;width:1.1px;height:290px;background:#2a2a2a"></div>
<div class="a" style="left:492.6px;top:119.4px;width:1.2px;height:290px;background:#333"></div>
<div class="a" style="left:561.6px;top:119.4px;width:1.2px;height:290px;background:#333"></div>
<div class="a" style="left:691.8px;top:119.4px;width:1.3px;height:290px;background:#222"></div>
<div class="a" style="left:24.4px;top:387.2px;width:191.1px;height:1.9px;background:#111"></div>
<div class="a" style="left:217.5px;top:387.2px;width:475.5px;height:1.9px;background:#111"></div>
<!-- frozen row line -->
<div class="a" style="left:24.4px;top:176.7px;width:668.6px;height:2.1px;background:#dde2ea"></div>
<div class="a" style="left:0;top:176.7px;width:24.4px;height:2.1px;background:#bdbdbd"></div>
<!-- selection G3:G9 -->
<div class="a" style="left:354.9px;top:178.7px;width:70.4px;height:209.3px;border:1.3px solid #1a73e8"></div>
<div class="a" style="left:422.3px;top:386.3px;width:3.6px;height:3px;background:#1a73e8"></div>
<!-- header cell texts -->
<div class="t kb" style="left:219.8px;top:123.1px;font-size:10px;font-weight:700;color:#000">0</div>
<div class="a k" style="left:219.8px;top:137.9px;font-size:7px;line-height:8.6px;color:#000;white-space:nowrap">It is not possible for<br>users to do this</div>
<div class="t kb" style="left:288.6px;top:123.1px;font-size:10px;font-weight:700;color:#000">1</div>
<div class="a k" style="left:288.6px;top:137.9px;font-size:7px;line-height:8.6px;color:#000;white-space:nowrap">A small minority of<br>users can do this<br>with extreme<br>difficulty or effort</div>
<div class="t kb" style="left:357.6px;top:123.1px;font-size:10px;font-weight:700;color:#000">2</div>
<div class="a k" style="left:357.6px;top:137.9px;font-size:7px;line-height:8.6px;color:#000;white-space:nowrap">Some users can do<br>this, but it still<br>requires difficulty or<br>effort for most</div>
<div class="t kb" style="left:426.8px;top:123.1px;font-size:10px;font-weight:700;color:#000">3</div>
<div class="a k" style="left:426.8px;top:137.9px;font-size:7px;line-height:8.6px;color:#000;white-space:nowrap">Most users can do<br>this, but it requires<br>difficulty or effort for<br>some</div>
<div class="t kb" style="left:496px;top:123.1px;font-size:10px;font-weight:700;color:#000">4</div>
<div class="a k" style="left:496px;top:137.9px;font-size:7px;line-height:8.6px;color:#000;white-space:nowrap">All users can do this<br>easily and<br>consistently</div>
<div class="a kb" style="left:564px;top:122.4px;font-size:10.3px;line-height:12.3px;font-weight:700;color:#000;white-space:nowrap">What is your service<br>failing to do for users?</div>

<!-- C column -->
<div class="t kb" style="left:46.2px;top:195.00px;font-size:10.4px;font-weight:700;color:#000">1</div>
<div class="t kb" style="left:65.5px;top:195.00px;font-size:10.4px;font-weight:700;color:#000">Be easy to find</div>
<div class="a k" style="left:65.5px;top:209.40px;font-size:7px;line-height:8.6px;color:#000;white-space:nowrap">The service must be able to be found by a<br>user with no prior knowledge of the task<br>they set out to do. For example, someone<br>who wants to ‘learn to drive’ must be able<br>to find their way to ‘get a driving licence’<br>as part of that service unaided</div>
<div class="t kb" style="left:65.5px;top:273.50px;font-size:8.35px;font-weight:700;color:#000">What this means in practice</div>
<div class="a k" style="left:65.5px;top:287.80px;font-size:7px;line-height:8.55px;color:#000;white-space:nowrap">The name of the service should describe<br>the task a user would recognise that<br>they’re trying to achieve. It should not<br>contain legal or technical language, the<br>name of a technology or acronyms</div>
<div class="t kb" style="left:65.5px;top:340.40px;font-size:8.35px;font-weight:700;color:#000">You’ve achieved good when</div>
<div class="a k" style="left:65.5px;top:354.20px;font-size:7px;line-height:8.4px;color:#000;white-space:nowrap">Your users can find your service unaided<br>by looking to complete the task they set<br>out to do</div>
<!-- row 10 clipped -->
<div class="a" style="left:24.4px;top:389.1px;width:190px;height:20px;overflow:hidden">
  <div class="t kb" style="left:21.8px;top:15.9px;font-size:10.4px;font-weight:700;color:#000">2</div>
  <div class="t kb" style="left:41.1px;top:15.9px;font-size:10.4px;font-weight:700;color:#000">Clearly explain its purpose</div>
</div>
<!-- F col number -->
<svg style="left:318.2px;top:279.2px" width="4.2" height="7.7" viewBox="0 0 4.2 7.7"><path d="M2.1 0H3.9V7.7H2.1V2.3H0.2V1.2Q1.9 1.1 2.1 0Z" fill="#000"/></svg>
<!-- J col notes -->
<div class="a k" style="left:564px;top:181.62px;font-size:7px;line-height:8.65px;color:#000;white-space:nowrap">Use this column to describe things<br>that your service is failing to do for<br>users<br><br>eg. the name of the service contains<br>an acronym (A.S.H.E.E.P) that some<br>users will find hard to understand<br>unless they’re already familiar with it</div>

<!-- vertical scrollbar -->
<div class="a" style="left:693px;top:120px;width:6px;height:57px;background:#f8f9fa"></div><div class="a" style="left:693px;top:176.7px;width:6px;height:2.1px;background:#e3e5e8"></div><div class="a" style="left:693px;top:178.8px;width:6px;height:230.2px;background:#fff"></div><div class="a" style="left:693px;top:393.3px;width:6px;height:0.5px;background:#e8eaed"></div><div class="a" style="left:693px;top:401.5px;width:6px;height:0.5px;background:#e8eaed"></div>
<div class="a" style="left:694.5px;top:180px;width:3.2px;height:13px;background:#dadce0;border-radius:1.6px"></div>
<svg style="left:694.8px;top:396.2px" width="2.5" height="1.5" viewBox="0 0 4 2"><path d="M0 2L2 0L4 2Z" fill="#9aa0a6"/></svg>
<svg style="left:694.8px;top:404.5px" width="2.5" height="1.5" viewBox="0 0 4 2"><path d="M0 0H4L2 2Z" fill="#9aa0a6"/></svg>


<!-- ===== Bottom ===== -->
<!-- horizontal scrollbar row -->
<div class="a" style="left:0;top:409px;width:699px;height:5.5px;background:#fff;border-top:0.6px solid #e8eaed"></div>
<div class="a" style="left:217.2px;top:410px;width:199.8px;height:4px;background:#dadce0;border-radius:2px"></div>
<svg style="left:679.3px;top:411px" width="1.6" height="2.4" viewBox="0 0 2 4"><path d="M2 0V4L0 2Z" fill="#9aa0a6"/></svg>
<svg style="left:687.3px;top:411px" width="1.6" height="2.4" viewBox="0 0 2 4"><path d="M0 0V4L2 2Z" fill="#9aa0a6"/></svg>
<!-- sheet tab bar -->
<div class="a" style="left:0;top:415.2px;width:699px;height:21.8px;background:#f1f3f4"></div>
<svg style="left:26.6px;top:422.9px" width="6" height="6" viewBox="0 0 6 6"><path d="M3 0V6M0 3H6" stroke="#5f6368" stroke-width="0.9"/></svg>
<div class="a" style="left:42.9px;top:422.4px;width:6.4px;height:6.8px;background:repeating-linear-gradient(#5f6368 0 1.6px,#9aa0a6 1.6px 2.3px)"></div>
<div class="a" style="left:61.8px;top:415.2px;width:46.4px;height:21.8px;background:#fff;box-shadow:0 0.5px 1px rgba(60,64,67,.3)"></div>
<div class="t" style="-webkit-text-stroke:0.15px #188038;left:70.4px;top:422.30px;font-size:7.6px;font-weight:700;color:#188038">Scale</div>
<svg style="left:95.4px;top:424.6px" width="3.6" height="1.8" viewBox="0 0 4 2"><path d="M0 0H4L2 2Z" fill="#188038"/></svg>
<div class="t" style="-webkit-text-stroke:0.12px #5f6368;left:116.7px;top:422.10px;font-size:7.8px;letter-spacing:0.3px;color:#5f6368">Instructions</div>
<svg style="left:165.8px;top:424.6px" width="3.6" height="1.8" viewBox="0 0 4 2"><path d="M0 0H4L2 2Z" fill="#80868b"/></svg>
<div class="a" style="left:178.3px;top:416.5px;width:0.6px;height:21px;background:#dadce0"></div>
<svg style="left:647.9px;top:420.3px" width="9.8" height="11" viewBox="0 0 9.8 11"><path d="M0.8 0H9Q9.8 0 9.8 0.8V8.4Q9.8 9.2 9 9.2H5.9L4.9 10.8L3.9 9.2H0.8Q0 9.2 0 8.4V0.8Q0 0 0.8 0Z" fill="#5f6368"/><path d="M4.9 2.1Q5.3 4.3 7.5 4.7Q5.3 5.1 4.9 7.3Q4.5 5.1 2.3 4.7Q4.5 4.3 4.9 2.1Z" fill="#fff"/></svg>
<svg style="left:682px;top:424.5px" width="3.8" height="5.4" viewBox="0 0 3.8 5.4"><path d="M3.2 0.4L0.8 2.7L3.2 5" stroke="#5f6368" stroke-width="1.1" fill="none"/></svg>


</div></body></html>
